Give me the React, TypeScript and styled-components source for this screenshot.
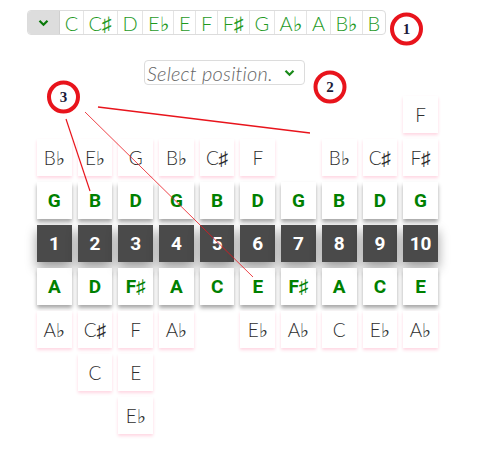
import React from 'react';
import styled, { createGlobalStyle } from 'styled-components';

const GlobalStyle = createGlobalStyle`
  body {
    margin: 0;
    background: #ffffff;
    font-family: Lato, 'Open Sans', sans-serif;
  }
`;

const Page = styled.div`
  position: relative;
  width: 478px;
  height: 458px;
  padding-top: 10px;
  box-sizing: border-box;
  overflow: hidden;
`;

const KeyBar = styled.div`
  display: inline-flex;
  margin-left: 27px;
  height: 25px;
  border: 1px solid #dcdcdc;
  border-radius: 4px;
  overflow: hidden;
  box-sizing: border-box;
`;

const KeyToggle = styled.div`
  width: 31px;
  background: #dddddd;
  display: flex;
  align-items: center;
  justify-content: center;
  border-right: 1px solid #d0d0d0;
`;

const KeyOption = styled.div`
  display: flex;
  align-items: center;
  padding: 0 4.7px;
  font-size: 20px;
  font-weight: 300;
  color: #1f9a1f;
  border-right: 1px solid #e4e4e4;
  line-height: 1;

  &:last-child {
    border-right: none;
  }
`;

const SelectBox = styled.div`
  display: flex;
  align-items: center;
  justify-content: space-between;
  margin: 25px 0 0 144px;
  width: 161px;
  height: 25px;
  box-sizing: border-box;
  padding: 0 9px 0 2px;
  border: 1px solid #dcdcdc;
  border-radius: 4px;
  font-size: 20px;
  font-style: italic;
  font-weight: 300;
  letter-spacing: 0.2px;
  color: #666666;
`;

const Board = styled.div`
  display: flex;
  align-items: flex-start;
  gap: 6px;
  margin: 11px 0 0 37px;
`;

const Column = styled.div`
  display: flex;
  flex-direction: column;
  gap: 6px;
`;

const Upper = styled.div`
  display: flex;
  flex-direction: column;
  justify-content: flex-end;
  gap: 6px;
  height: 80px;
`;

const Cell = styled.div<{ $kind: 'extra' | 'string' | 'fret' }>`
  min-width: 34.7px;
  height: 37px;
  padding: 0 3px;
  box-sizing: border-box;
  display: flex;
  align-items: center;
  justify-content: center;
  font-size: 19px;
  font-family: ${(p) => (p.$kind === 'extra' ? "Lato, 'Open Sans', sans-serif" : 'Roboto, Arial, sans-serif')};
  font-weight: ${(p) => (p.$kind === 'extra' ? 300 : 700)};
  background: ${(p) => (p.$kind === 'fret' ? '#4a4a4a' : '#ffffff')};
  color: ${(p) => (p.$kind === 'fret' ? '#ffffff' : p.$kind === 'string' ? '#008000' : '#2e2e2e')};
  box-shadow: ${(p) =>
    p.$kind === 'fret'
      ? '0 6px 12px rgba(0, 0, 0, 0.4)'
      : p.$kind === 'string'
      ? '0 3px 4px rgba(0, 0, 0, 0.35)'
      : '0 2px 3px rgba(255, 120, 160, 0.3)'};
`;

const Overlay = styled.svg`
  position: absolute;
  left: 0;
  top: 0;
  pointer-events: none;
`;

const Chevron = ({ color }: { color: string }) => (
  <svg width="11" height="8" viewBox="0 0 11 8">
    <path d="M1.5 1.8 L5.5 5.8 L9.5 1.8" fill="none" stroke={color} strokeWidth="2.2" />
  </svg>
);

const keys = ['C', 'C♯', 'D', 'E♭', 'E', 'F', 'F♯', 'G', 'A♭', 'A', 'B♭', 'B'];

type Fret = { up: string[]; top: string; n: number; low: string; down: string[] };

const frets: Fret[] = [
  { up: ['B♭'], top: 'G', n: 1, low: 'A', down: ['A♭'] },
  { up: ['E♭'], top: 'B', n: 2, low: 'D', down: ['C♯', 'C'] },
  { up: ['G'], top: 'D', n: 3, low: 'F♯', down: ['F', 'E', 'E♭'] },
  { up: ['B♭'], top: 'G', n: 4, low: 'A', down: ['A♭'] },
  { up: ['C♯'], top: 'B', n: 5, low: 'C', down: [] },
  { up: ['F'], top: 'D', n: 6, low: 'E', down: ['E♭'] },
  { up: [], top: 'G', n: 7, low: 'F♯', down: ['A♭'] },
  { up: ['B♭'], top: 'B', n: 8, low: 'A', down: ['C'] },
  { up: ['C♯'], top: 'D', n: 9, low: 'C', down: ['E♭'] },
  { up: ['F', 'F♯'], top: 'G', n: 10, low: 'E', down: ['A♭'] },
];

const Marker = ({ cx, cy, label }: { cx: number; cy: number; label: string }) => (
  <g>
    <circle cx={cx} cy={cy} r="14.5" fill="none" stroke="#e8141c" strokeWidth="4" />
    <text
      x={cx}
      y={cy + 5}
      textAnchor="middle"
      fontSize="15"
      fontWeight="bold"
      fontFamily="'Liberation Serif', serif"
      fill="#1b1b3a"
    >
      {label}
    </text>
  </g>
);

export default function App() {
  return (
    <Page>
      <GlobalStyle />
      <KeyBar>
        <KeyToggle>
          <Chevron color="#0a7a0a" />
        </KeyToggle>
        {keys.map((k) => (
          <KeyOption key={k}>{k}</KeyOption>
        ))}
      </KeyBar>
      <SelectBox>
        <span>Select position.</span>
        <Chevron color="#1a8a1a" />
      </SelectBox>
      <Board>
        {frets.map((f) => (
          <Column key={f.n}>
            <Upper>
              {f.up.map((u, i) => (
                <Cell $kind="extra" key={i}>
                  {u}
                </Cell>
              ))}
            </Upper>
            <Cell $kind="string">{f.top}</Cell>
            <Cell $kind="fret">{f.n}</Cell>
            <Cell $kind="string">{f.low}</Cell>
            {f.down.map((d, i) => (
              <Cell $kind="extra" key={i}>
                {d}
              </Cell>
            ))}
          </Column>
        ))}
      </Board>
      <Overlay width="478" height="458" viewBox="0 0 478 458">
        <line x1="98" y1="107" x2="310" y2="133" stroke="#e8141c" strokeWidth="1.3" />
        <line x1="66" y1="119" x2="90" y2="191" stroke="#e8141c" strokeWidth="1.2" />
        <line x1="85" y1="112" x2="253" y2="277" stroke="#e8141c" strokeWidth="0.8" />
        <Marker cx={406.5} cy={29} label="1" />
        <Marker cx={330} cy={87} label="2" />
        <Marker cx={63.5} cy={97} label="3" />
      </Overlay>
    </Page>
  );
}
